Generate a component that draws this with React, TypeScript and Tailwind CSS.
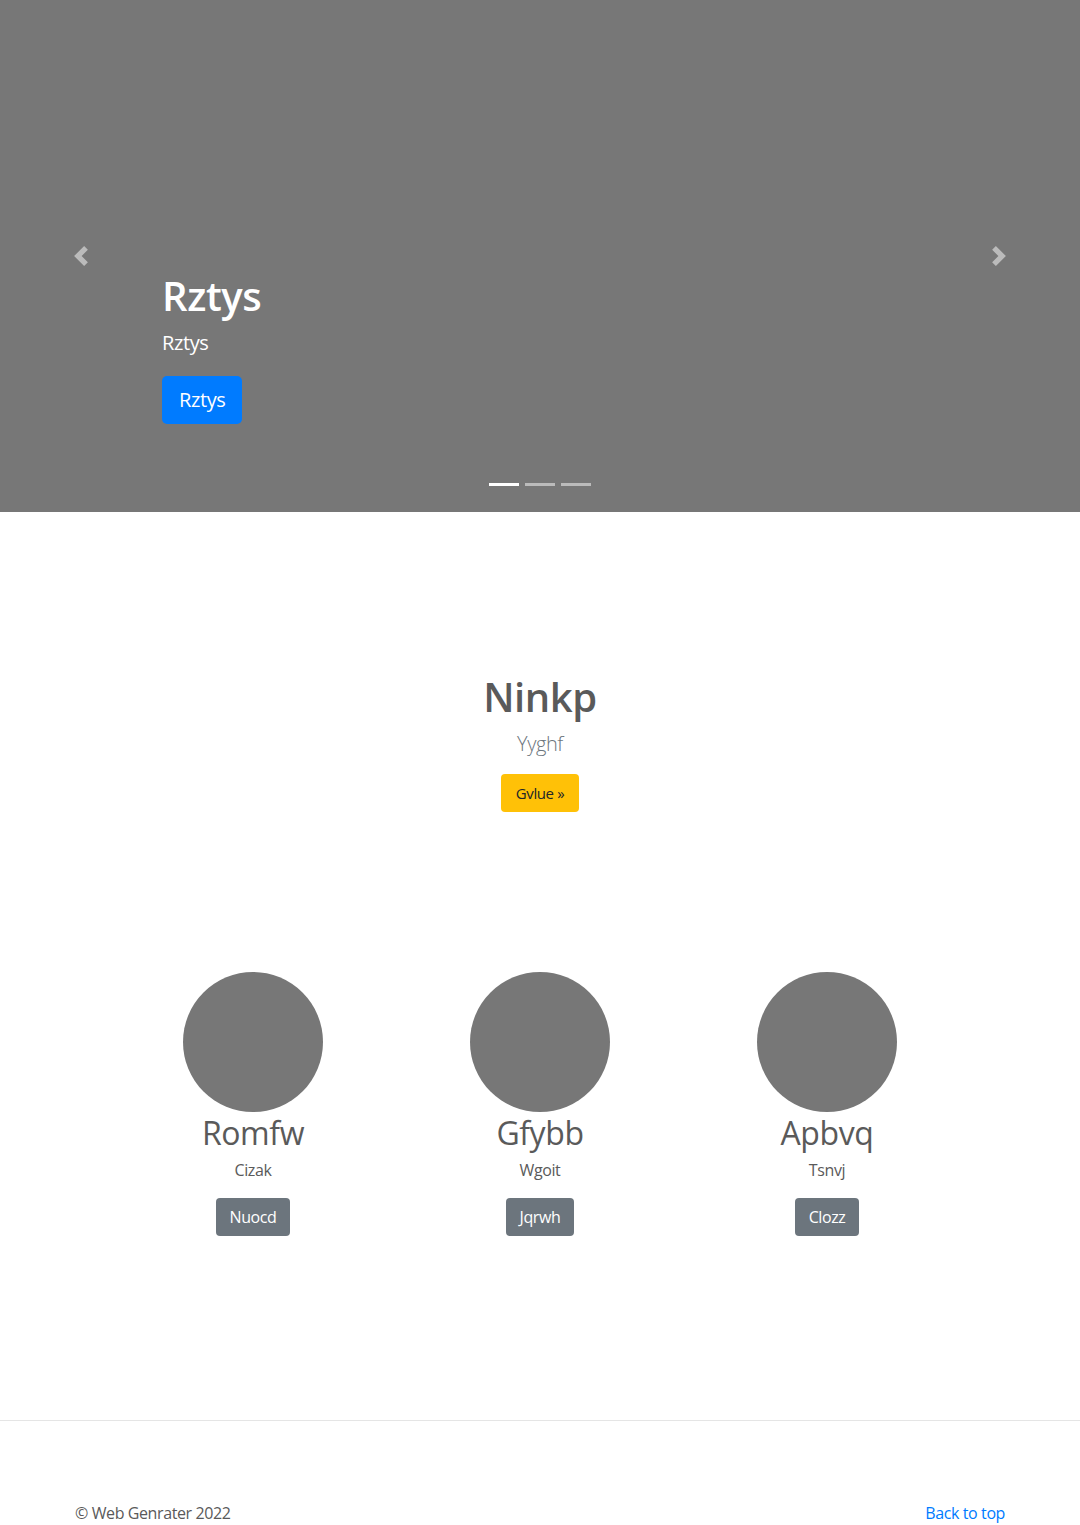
import React from 'react'

const features = [
  { title: 'Romfw', text: 'Cizak', btn: 'Nuocd' },
  { title: 'Gfybb', text: 'Wgoit', btn: 'Jqrwh' },
  { title: 'Apbvq', text: 'Tsnvj', btn: 'Clozz' },
]

function Chevron({ dir }: { dir: 'prev' | 'next' }) {
  return (
    <svg width="20" height="20" viewBox="0 0 8 8" fill="#fff">
      {dir === 'prev' ? (
        <path d="M5.25 0l-4 4 4 4 1.5-1.5L4.25 4l2.5-2.5L5.25 0z" />
      ) : (
        <path d="M2.75 0l-1.5 1.5L3.75 4l-2.5 2.5L2.75 8l4-4-4-4z" />
      )}
    </svg>
  )
}

export default function App() {
  return (
    <div className="min-h-[1525px] bg-white text-[#5a5a5a] font-['Open_Sans',sans-serif] tracking-[-0.025em]">
      {/* carousel */}
      <div className="relative h-[512px] bg-[#777]">
        <div className="h-full flex flex-col justify-end items-start px-[162px] pb-[88px] text-white">
          <h1 className="text-[40px] leading-[48px] font-semibold mb-2">Rztys</h1>
          <p className="text-[20px] leading-[30px] mb-[18px]">Rztys</p>
          <a href="#" className="h-12 px-[17px] flex items-center rounded-[5px] bg-[#007bff] text-[20px] text-white">Rztys</a>
        </div>
        <a href="#" className="absolute left-0 top-0 bottom-0 w-[15%] flex items-center justify-center opacity-50">
          <Chevron dir="prev" />
        </a>
        <a href="#" className="absolute right-0 top-0 bottom-0 w-[15%] flex items-center justify-center opacity-50">
          <Chevron dir="next" />
        </a>
        <div className="absolute left-0 right-0 bottom-[26px] flex justify-center gap-[6px]">
          <span className="w-[30px] h-[3px] bg-white"></span>
          <span className="w-[30px] h-[3px] bg-white opacity-50"></span>
          <span className="w-[30px] h-[3px] bg-white opacity-50"></span>
        </div>
      </div>

      {/* jumbo */}
      <div className="flex flex-col items-center pt-[161px] text-center">
        <h1 className="text-[40px] leading-[48px] font-semibold mb-2">Ninkp</h1>
        <p className="text-[20px] leading-[30px] font-light text-[#6c757d] mb-[15px]">Yyghf</p>
        <a href="#" className="h-[38px] px-[15px] flex items-center rounded bg-[#ffc107] text-[#212529] text-[15px]">Gvlue »</a>
      </div>

      {/* features */}
      <div className="w-[861px] mx-auto grid grid-cols-3 mt-[160px] text-center">
        {features.map((f) => (
          <div key={f.title} className="flex flex-col items-center">
            <div className="w-[140px] h-[140px] rounded-full bg-[#777]"></div>
            <h2 className="text-[32px] leading-[38px] font-normal mt-[2px] mb-[6px]">{f.title}</h2>
            <p className="text-[16px] leading-6 mb-4">{f.text}</p>
            <a href="#" className="h-[38px] px-[14px] flex items-center rounded bg-[#6c757d] text-white text-[16px]">{f.btn}</a>
          </div>
        ))}
      </div>

      <hr className="mt-[184px] border-t border-[#e5e5e5]" />

      <footer className="flex justify-between px-[75px] pt-[80px] pb-6 text-[16px] leading-6">
        <p>© Web Genrater 2022</p>
        <a href="#" className="text-[#007bff]">Back to top</a>
      </footer>
    </div>
  )
}
